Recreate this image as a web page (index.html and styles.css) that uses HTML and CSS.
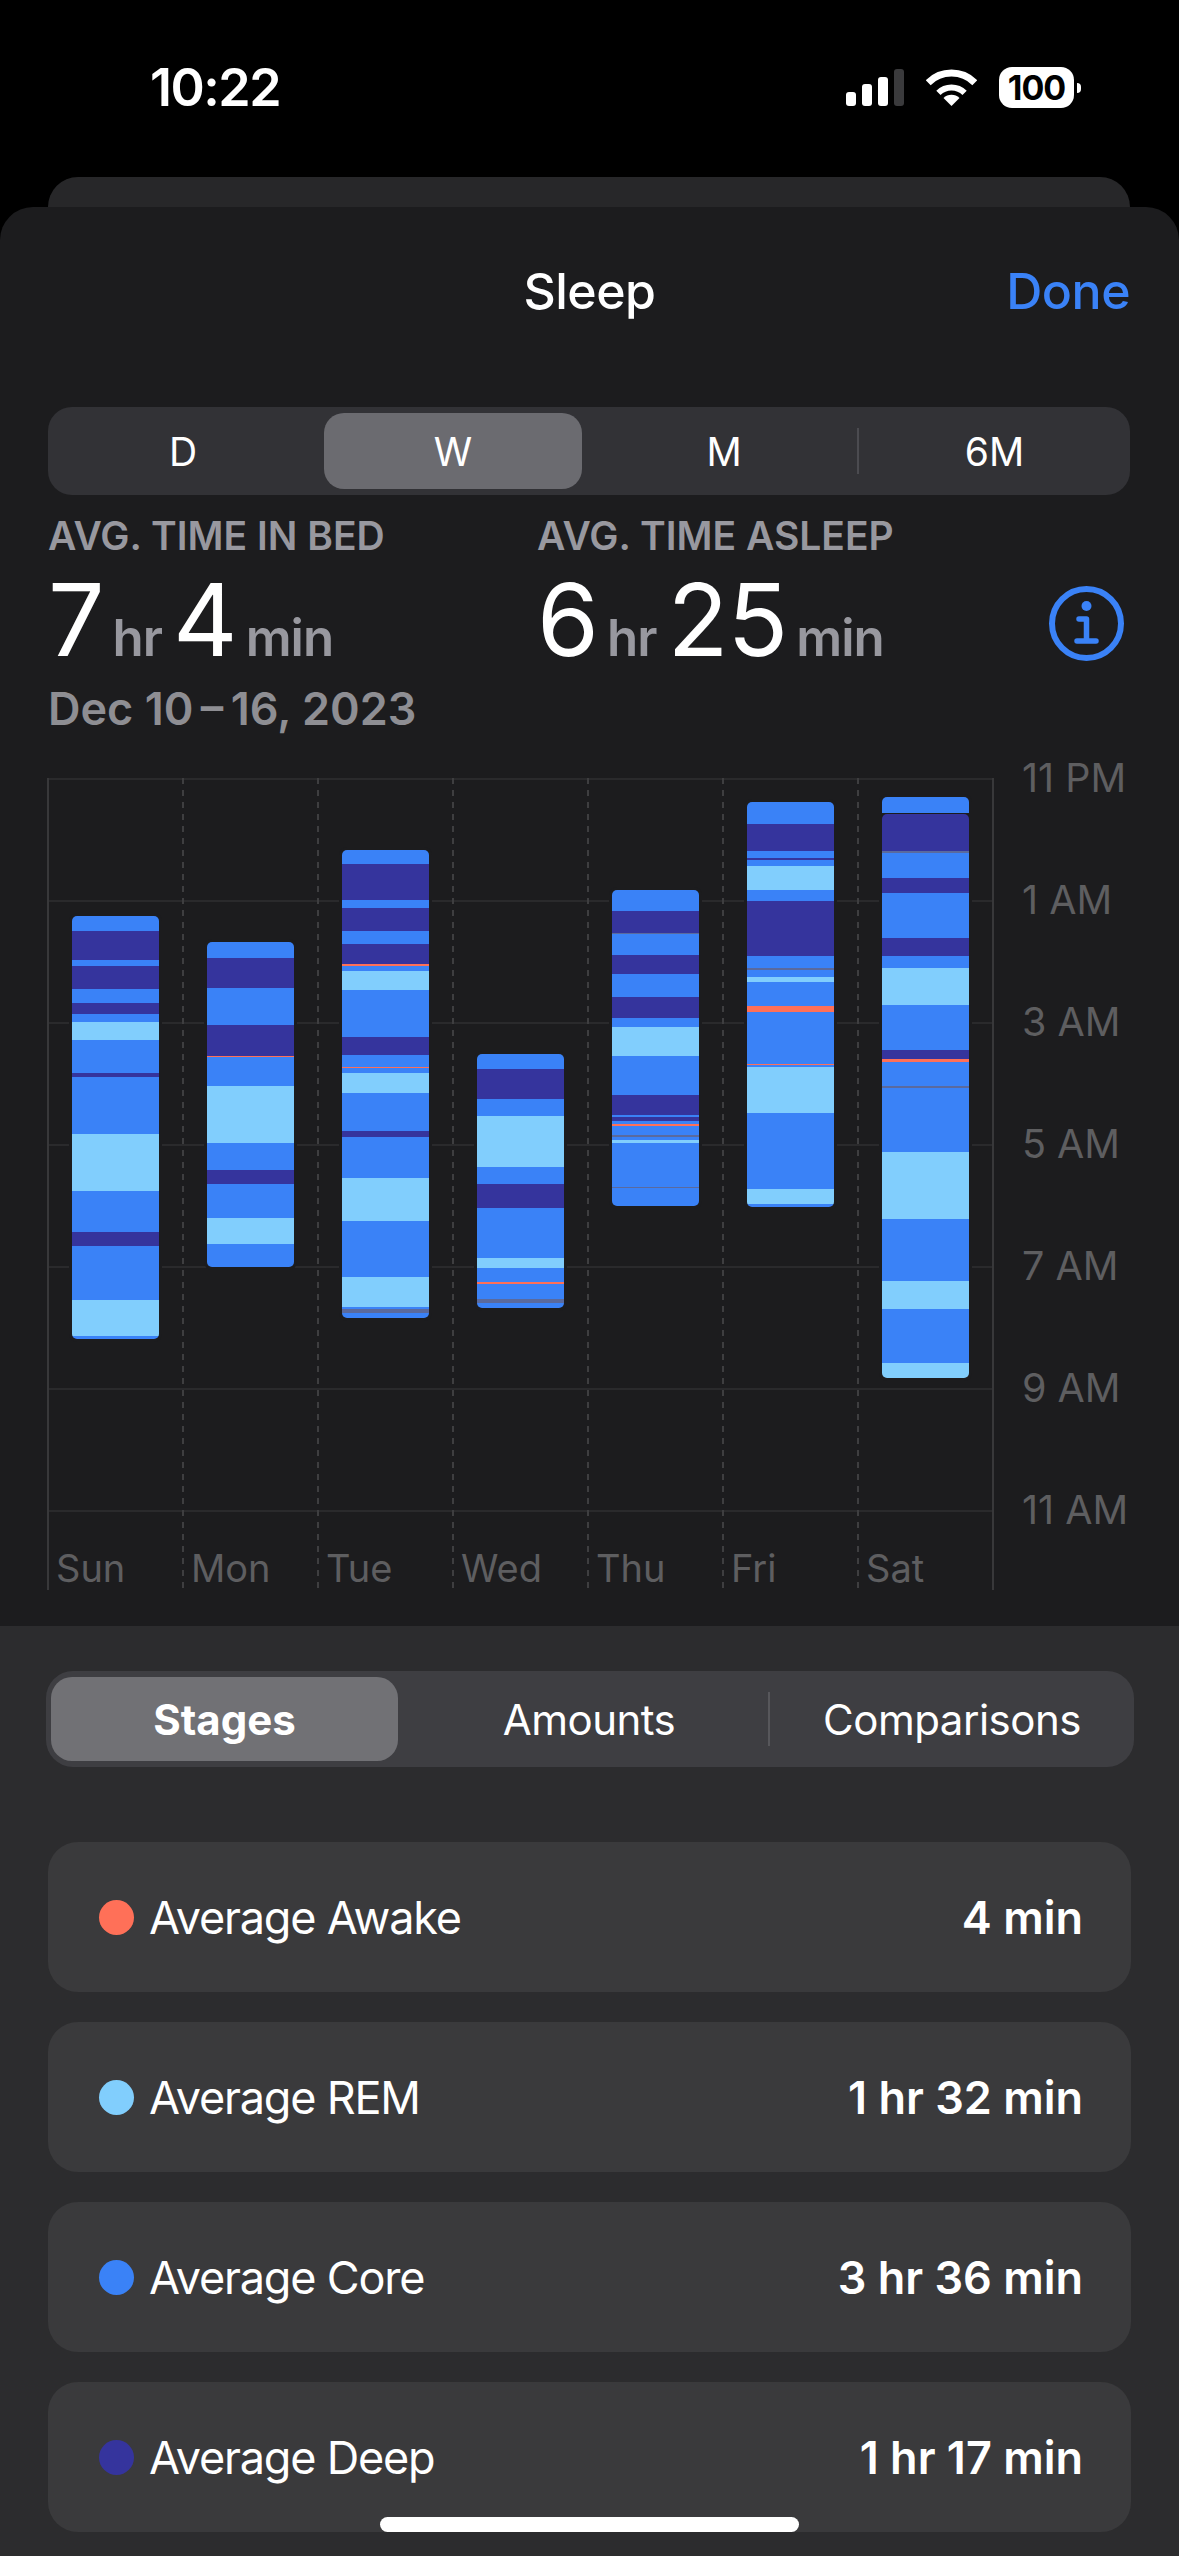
FILE: index.html
```html
<!DOCTYPE html>
<html lang="en">
<head>
  <meta charset="UTF-8">
  <meta name="viewport" content="width=device-width, initial-scale=1.0">
  <title>Sleep</title>

  <link rel="stylesheet" href="styles.css">
</head>
<body>
  <div class="status-bar">
    <span class="time">10:22</span>
    <div class="status-icons">
      <svg class="signal" width="58" height="37" viewBox="0 0 58 37">
        <rect x="0" y="23" width="10" height="14" rx="3" fill="#fff"/>
        <rect x="16" y="15" width="10" height="22" rx="3" fill="#fff"/>
        <rect x="32" y="8" width="10" height="29" rx="3" fill="#fff"/>
        <rect x="48" y="0" width="10" height="37" rx="3" fill="#3a3a3c"/>
      </svg>
      <svg class="wifi" width="51" height="37" viewBox="0 0 51 37">
        <path d="M2.2 13.7A33 33 0 0 1 48.8 13.7" fill="none" stroke="#fff" stroke-width="7"/>
        <path d="M12.4 23.9A18.5 18.5 0 0 1 38.6 23.9" fill="none" stroke="#fff" stroke-width="6"/>
        <path d="M25.5 37L17.5 29A11.5 11.5 0 0 1 33.5 29Z" fill="#fff"/>
      </svg>
      <div class="battery">100</div>
    </div>
  </div>

  <div class="back-card"></div>

  <div class="sheet">
    <div class="sheet-header">
      <h2>Sleep</h2>
      <a href="#" class="done">Done</a>
    </div>

    <div class="seg seg-range">
      <div class="seg-item">D</div>
      <div class="seg-item active">W</div>
      <div class="seg-item divided">M</div>
      <div class="seg-item">6M</div>
    </div>

    <div class="stats">
      <div class="stat stat-bed">
        <div class="stat-label">AVG. TIME IN BED</div>
        <div class="stat-value">7<small>hr</small>4<small>min</small></div>
      </div>
      <div class="stat stat-asleep">
        <div class="stat-label">AVG. TIME ASLEEP</div>
        <div class="stat-value">6<small>hr</small>25<small>min</small></div>
      </div>
      <svg class="info" width="75" height="75" viewBox="0 0 75 75">
        <circle cx="37.5" cy="37.5" r="34.5" fill="none" stroke="#3a82f7" stroke-width="6"/>
        <circle cx="37.5" cy="20" r="5" fill="#3a82f7"/>
        <path d="M30 33H37.5V55M28 55H47" fill="none" stroke="#3a82f7" stroke-width="5.5" stroke-linecap="round" stroke-linejoin="round"/>
      </svg>
    </div>
    <div class="stat-date">Dec 10&thinsp;–&thinsp;16, 2023</div>

    <div class="chart">
      <div class="plot" id="plot"></div>
      <div class="hours">
        <span>11 PM</span>
        <span>1 AM</span>
        <span>3 AM</span>
        <span>5 AM</span>
        <span>7 AM</span>
        <span>9 AM</span>
        <span>11 AM</span>
      </div>
    </div>
  </div>

  <div class="details">
    <div class="seg seg-view">
      <div class="seg-item active">Stages</div>
      <div class="seg-item divided">Amounts</div>
      <div class="seg-item">Comparisons</div>
    </div>

    <div class="rows">
      <div class="row">
        <span class="dot awake"></span>
        <span class="row-label">Average Awake</span>
        <span class="row-value">4 min</span>
      </div>
      <div class="row">
        <span class="dot rem"></span>
        <span class="row-label">Average REM</span>
        <span class="row-value">1 hr 32 min</span>
      </div>
      <div class="row">
        <span class="dot core"></span>
        <span class="row-label">Average Core</span>
        <span class="row-value">3 hr 36 min</span>
      </div>
      <div class="row">
        <span class="dot deep"></span>
        <span class="row-label">Average Deep</span>
        <span class="row-value">1 hr 17 min</span>
      </div>
    </div>
  </div>

  <div class="home-bar"></div>

  <script src="chart.js"></script>
</body>
</html>
```

FILE: styles.css
```css
:root {
  --blue: #3a82f7;
  --awake: #ff7058;
  --rem: #81cefd;
  --deep: #35349d;
  --mix: #5a6a9e;
  --sheet: #1c1c1e;
  --panel: #2c2c2e;
  --card: #3a3a3c;
  --muted: #98989f;
  --axis: #5e5e60;
}

* {
  box-sizing: border-box;
}

body {
  margin: 0;
  height: 2556px;
  overflow: hidden;
  position: relative;
  background: #000;
  color: #fff;
  font-family: Inter, 'Noto Sans', sans-serif;
}

/* status bar */
.status-bar {
  display: flex;
  justify-content: space-between;
  align-items: flex-start;
  height: 177px;
  padding: 60px 105px 0 150px;
}

.time {
  font-size: 52px;
  font-weight: 600;
  line-height: 56px;
  letter-spacing: -1.5px;
}

.status-icons {
  display: flex;
  align-items: center;
  padding-top: 7px;
}

.signal {
  margin-right: 22px;
}

.wifi {
  margin-right: 22px;
}

.battery {
  position: relative;
  width: 75px;
  height: 41px;
  border-radius: 13px;
  background: #fff;
  color: #000;
  font-size: 34px;
  font-weight: 700;
  line-height: 41px;
  text-align: center;
  letter-spacing: -1px;
}

.battery::after {
  content: '';
  position: absolute;
  left: 78px;
  top: 16px;
  width: 4px;
  height: 10px;
  border-radius: 0 5px 5px 0;
  background: #fff;
}

.back-card {
  height: 60px;
  margin: 0 49px 0 48px;
  border-radius: 30px 30px 0 0;
  background: #272729;
}

/* sheet */
.sheet {
  position: relative;
  margin-top: -30px;
  height: 1419px;
  padding: 0 48px;
  border-radius: 33px 33px 0 0;
  background: var(--sheet);
}

.sheet-header {
  display: flex;
  justify-content: center;
  height: 200px;
  padding-top: 55px;
  position: relative;
}

.sheet-header h2 {
  margin: 0;
  font-size: 50px;
  font-weight: 500;
  line-height: 58px;
  letter-spacing: -0.5px;
}

.done {
  position: absolute;
  right: 1px;
  top: 55px;
  color: var(--blue);
  font-size: 50px;
  font-weight: 500;
  line-height: 58px;
  letter-spacing: -0.5px;
  text-decoration: none;
}

/* segmented controls */
.seg {
  display: grid;
  align-items: stretch;
}

.seg-item {
  position: relative;
  display: flex;
  justify-content: center;
  align-items: center;
}

.seg-item.divided::after {
  content: '';
  position: absolute;
  right: 0;
  width: 2px;
}

.seg-range {
  grid-template-columns: 270px 271px 270px 1fr;
  width: 1082px;
  height: 88px;
  padding: 6px 0;
  border-radius: 24px;
  background: #323236;
  font-size: 39px;
}

.seg-range .seg-item.active {
  margin: 0 7px 0 6px;
  border-radius: 20px;
  background: #6b6b70;
}

.seg-range .divided::after {
  top: 15px;
  height: 46px;
  background: #4b4b50;
}

.seg-view {
  grid-template-columns: 362px 362px 1fr;
  height: 96px;
  padding: 6px 0;
  border-radius: 27px;
  background: #3e3e42;
  font-size: 42px;
  letter-spacing: -0.5px;
}

.seg-view .seg-item.active {
  margin: 0 10px 0 5px;
  border-radius: 21px;
  background: #717175;
  font-weight: 700;
  letter-spacing: 0;
}

.seg-view .divided::after {
  top: 15px;
  height: 54px;
  background: #57575b;
}

/* stat numbers */
.stats {
  display: flex;
  position: relative;
  height: 160px;
  padding-top: 18px;
}

.stat-bed {
  width: 489px;
}

.stat-label {
  color: var(--muted);
  font-size: 39px;
  font-weight: 600;
  line-height: 46px;
}

.stat-value {
  font-size: 100px;
  line-height: 112px;
  letter-spacing: -1px;
  margin-top: 5px;
}

.stat-value small {
  margin: 0 11px 0 9px;
  color: var(--muted);
  font-size: 51px;
  font-weight: 600;
  letter-spacing: -1px;
}

.info {
  position: absolute;
  left: 1001px;
  top: 91px;
}

.stat-date {
  color: #8e8e93;
  font-size: 45px;
  font-weight: 600;
  line-height: 54px;
  padding-top: 27px;
  height: 123px;
}

/* chart */
.chart {
  display: flex;
  align-items: flex-start;
}

.plot {
  display: grid;
  grid-template-columns: repeat(7, 135px);
  width: 945px;
  height: 812px;
  border-left: 2px solid #38383a;
  margin-left: -1px;
  background: repeating-linear-gradient(to bottom, #2a2a2c 0 2px, transparent 2px 122px) no-repeat;
  background-size: 100% 734px;
}

.day {
  display: flex;
  flex-direction: column;
  background: repeating-linear-gradient(to bottom, #3e3e40 0 6px, transparent 6px 12px) no-repeat right top;
  background-size: 2px 100%;
}

.day:last-child {
  background: linear-gradient(#38383a, #38383a) no-repeat right top;
  background-size: 2px 100%;
}

.bar {
  display: flex;
  flex-direction: column;
  width: 87px;
  margin-left: 23px;
  overflow: hidden;
  border-radius: 5px;
  box-shadow: 0 0 0 3px var(--sheet);
}

.bar i {
  display: block;
  flex: none;
}

.bar .core { background: var(--blue); }
.bar .deep { background: var(--deep); }
.bar .rem { background: var(--rem); }
.bar .awake { background: var(--awake); }
.bar .mix { background: var(--mix); }

.bar .solo {
  border-bottom: 1px solid var(--sheet);
}

.bar .lid {
  border-radius: 5px 5px 0 0;
}

.day-name {
  margin-top: auto;
  padding: 0 0 0 7px;
  color: var(--axis);
  font-size: 38px;
  line-height: 44px;
}

.hours {
  display: flex;
  flex-direction: column;
  margin: -61px 0 0 30px;
  color: var(--axis);
  font-size: 39.5px;
  white-space: nowrap;
}

.hours span {
  height: 122px;
  line-height: 122px;
}

/* lower panel */
.details {
  height: 930px;
  padding: 45px 45px 0 46px;
  background: var(--panel);
}

.rows {
  display: flex;
  flex-direction: column;
  gap: 30px;
  margin: 75px 3px 0 2px;
}

.row {
  display: flex;
  align-items: center;
  height: 150px;
  padding: 0 48px 0 51px;
  border-radius: 30px;
  background: var(--card);
  font-size: 45px;
}

.dot {
  width: 35px;
  height: 35px;
  margin-right: 15px;
  border-radius: 50%;
}

.dot.awake { background: var(--awake); }
.dot.rem { background: var(--rem); }
.dot.core { background: var(--blue); }
.dot.deep { background: var(--deep); }

.row-label {
  letter-spacing: -1.2px;
}

.row-value {
  margin-left: auto;
  font-weight: 600;
}

.home-bar {
  position: absolute;
  left: 380px;
  bottom: 24px;
  width: 419px;
  height: 15px;
  border-radius: 8px;
  background: #fff;
}
```

FILE: chart.js
```js
// Stage bands per night. Each entry is [stage, y where the band ends], measured on the page.
const CHART_TOP = 778;

const nights = [
  { name: 'Sun', top: 916, bands: [
    ['core', 931], ['deep', 960], ['core', 966], ['deep', 989], ['core', 1003], ['deep', 1014],
    ['core', 1022], ['rem', 1040], ['core', 1073], ['deep', 1077], ['core', 1134], ['rem', 1191],
    ['core', 1232], ['deep', 1246], ['core', 1300], ['rem', 1336], ['core', 1339]
  ]},
  { name: 'Mon', top: 942, bands: [
    ['core', 958], ['deep', 988], ['core', 1025], ['deep', 1056], ['awake', 1057], ['core', 1086],
    ['rem', 1143], ['core', 1170], ['deep', 1184], ['core', 1218], ['rem', 1244], ['core', 1267]
  ]},
  { name: 'Tue', top: 850, bands: [
    ['core', 864], ['deep', 900], ['core', 908], ['deep', 931], ['core', 944], ['deep', 964],
    ['awake', 966], ['core', 971], ['rem', 990], ['core', 1037], ['deep', 1055], ['core', 1067],
    ['awake', 1068], ['core', 1073], ['rem', 1093], ['core', 1131], ['deep', 1137], ['core', 1178],
    ['rem', 1221], ['core', 1277], ['rem', 1307], ['core', 1309], ['mix', 1313], ['core', 1318]
  ]},
  { name: 'Wed', top: 1054, bands: [
    ['core', 1069], ['deep', 1099], ['core', 1116], ['rem', 1167], ['core', 1184], ['deep', 1208],
    ['core', 1258], ['rem', 1268], ['core', 1282], ['awake', 1284], ['core', 1299], ['mix', 1303],
    ['core', 1308]
  ]},
  { name: 'Thu', top: 890, bands: [
    ['core', 911], ['deep', 933], ['mix', 934], ['core', 955], ['deep', 974], ['core', 997],
    ['deep', 1018], ['core', 1027], ['rem', 1056], ['core', 1095], ['deep', 1115], ['core', 1117],
    ['deep', 1121], ['core', 1124], ['awake', 1126], ['core', 1135], ['mix', 1137], ['core', 1140],
    ['rem', 1143], ['core', 1187], ['mix', 1188], ['core', 1206]
  ]},
  { name: 'Fri', top: 802, bands: [
    ['core', 824], ['deep', 851], ['core', 858], ['deep', 860], ['core', 866], ['rem', 890],
    ['core', 901], ['deep', 956], ['core', 968], ['mix', 970], ['core', 977], ['rem', 982],
    ['core', 1006], ['awake', 1012], ['core', 1064], ['awake', 1065], ['core', 1067], ['rem', 1113],
    ['core', 1189], ['rem', 1204], ['core', 1207]
  ]},
  { name: 'Sat', top: 797, bands: [
    ['core solo', 814], ['deep lid', 851], ['mix', 853], ['core', 878], ['deep', 893], ['core', 938],
    ['deep', 956], ['core', 968], ['rem', 1005], ['core', 1050], ['deep', 1059], ['awake', 1062],
    ['core', 1086], ['mix', 1088], ['core', 1152], ['rem', 1219], ['core', 1281], ['rem', 1309],
    ['core', 1363], ['rem', 1378]
  ]}
];

const plot = document.getElementById('plot');

nights.forEach(night => {
  const day = document.createElement('div');
  day.className = 'day';

  const bar = document.createElement('div');
  bar.className = 'bar';
  bar.style.marginTop = (night.top - CHART_TOP) + 'px';

  let y = night.top;
  night.bands.forEach(([stage, end]) => {
    const band = document.createElement('i');
    band.className = stage;
    band.style.height = (end - y) + 'px';
    bar.appendChild(band);
    y = end;
  });

  const name = document.createElement('div');
  name.className = 'day-name';
  name.innerText = night.name;

  day.appendChild(bar);
  day.appendChild(name);
  plot.appendChild(day);
});
```
